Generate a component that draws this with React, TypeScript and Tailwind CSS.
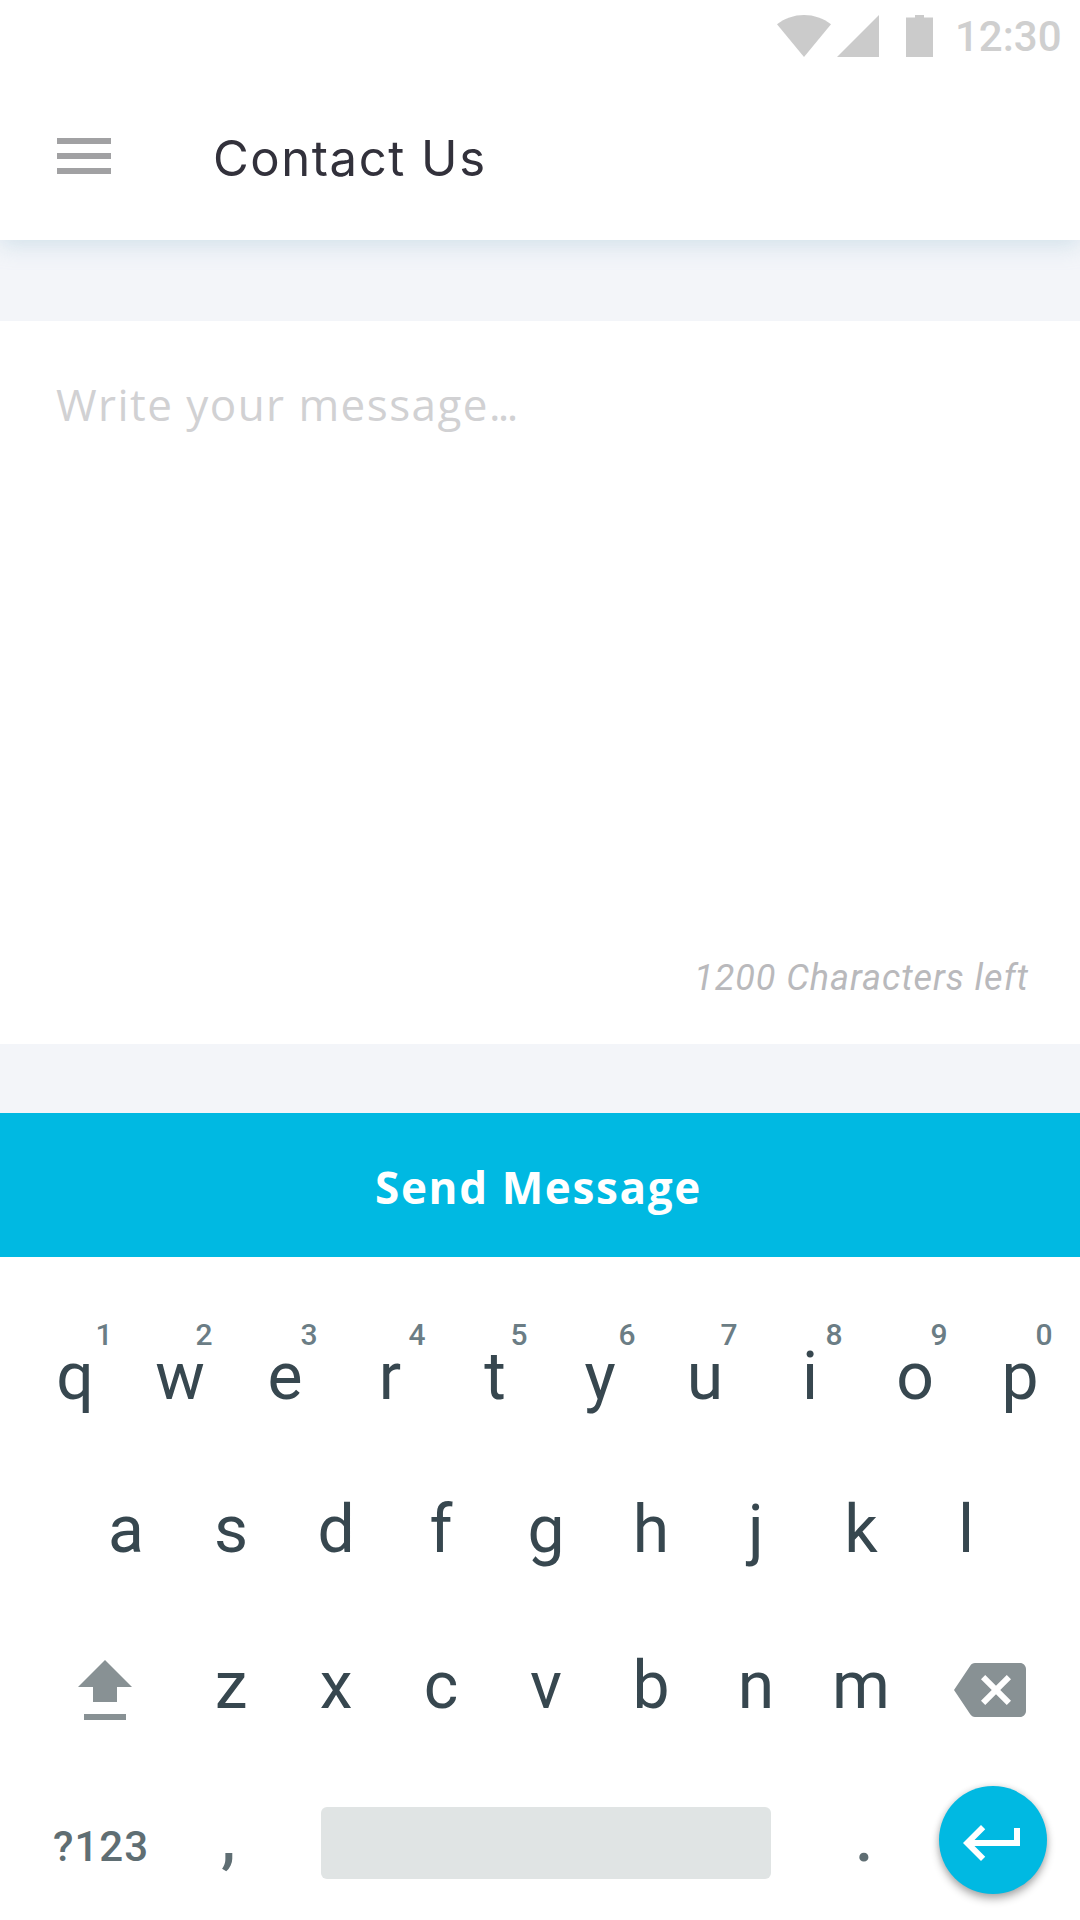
const topRow = [
  { key: 'q', digit: '1', shift: 'left-[73px]' },
  { key: 'w', digit: '2', shift: 'left-[68px]' },
  { key: 'e', digit: '3', shift: 'left-[68px]' },
  { key: 'r', digit: '4', shift: 'left-[71px]' },
  { key: 't', digit: '5', shift: 'left-[68px]' },
  { key: 'y', digit: '6', shift: 'left-[71px]' },
  { key: 'u', digit: '7', shift: 'left-[68px]' },
  { key: 'i', digit: '8', shift: 'left-[68px]' },
  { key: 'o', digit: '9', shift: 'left-[68px]' },
  { key: 'p', digit: '0', shift: 'left-[68px]' },
];
const middleRow = ['a', 's', 'd', 'f', 'g', 'h', 'j', 'k', 'l'];
const bottomRow = ['z', 'x', 'c', 'v', 'b', 'n', 'm'];

function Key({ label, digit, shift }: { label: string; digit?: string; shift?: string }) {
  return (
    <button className="relative w-[105px] shrink-0 text-center text-[66px] leading-[77px] text-[#37474f]">
      {label}
      {digit && (
        <span className={`absolute -top-[21px] text-[30px] leading-[35px] font-medium text-[#6b7d85] ${shift}`}>
          {digit}
        </span>
      )}
    </button>
  );
}

function StatusBar() {
  return (
    <div className="flex h-[72px] items-start justify-end pr-[18px] text-[#cbcbcb]">
      <svg className="mt-[15px] h-[42px] w-[54px]" viewBox="0 0 54 42" fill="currentColor">
        <path d="M27 42 0 9.3C7.6 3.4 16.9 0 27 0s19.400 3.4 27 9.300z" />
      </svg>
      <svg className="mt-[15px] ml-1.5 h-[42px] w-[42px]" viewBox="0 0 42 42" fill="currentColor">
        <path d="M42 0v42H0z" />
      </svg>
      <svg className="mt-[15px] ml-[27px] h-[42px] w-[27px]" viewBox="0 0 27 42" fill="currentColor">
        <path d="M9 0h9v2.500h9V42H0V2.500h9z" />
      </svg>
      <span className="mt-3 ml-[22px] w-[107px] text-[42px] leading-[49px] font-medium text-[#cfcfcf]">12:30</span>
    </div>
  );
}

export default function App() {
  return (
    <div className="flex h-[1920px] w-[1080px] flex-col overflow-hidden bg-[#f3f5f9] font-['Roboto',sans-serif]">
      <header className="h-[240px] shrink-0 bg-white shadow-[0_6px_20px_rgba(170,200,218,0.42)]">
        <StatusBar />
        <div className="flex items-start pl-[57px]">
          <button className="mt-[66px] flex w-[54px] flex-col gap-[9px]" aria-label="Menu">
            <span className="h-1.5 bg-[#a1a1a3]" />
            <span className="h-1.5 bg-[#a1a1a3]" />
            <span className="h-1.5 bg-[#a1a1a3]" />
          </button>
          <h1 className="mt-[57px] ml-[102px] font-['Inter',sans-serif] text-[49px] leading-[59px] tracking-[1.55px] text-[#32313b]">
            Contact Us
          </h1>
        </div>
      </header>

      <section className="mt-[81px] flex h-[723px] shrink-0 flex-col justify-between bg-white pt-[55px] pr-[51px] pb-[45px] pl-[56px]">
        <p className="font-['Open_Sans',sans-serif] text-[44px] leading-[57px] tracking-[1.450px] text-[#d1d1d3]">
          Write your message<span className="tracking-[-2.700px]">...</span>
        </p>
        <p className="text-right text-[36px] leading-[42px] tracking-[0.95px] text-[#b9b9bc] italic">
          1200 Characters left
        </p>
      </section>

      <button className="mt-[69px] flex h-36 shrink-0 items-start justify-center bg-[#00b9e2] pt-[45px] pr-[3px] font-['Open_Sans',sans-serif] text-[44px] leading-[59px] font-bold tracking-[1.650px] text-white">
        Send Message
      </button>

      <div className="flex grow flex-col bg-white pt-[81px]">
        <div className="flex h-[153px] shrink-0 items-start pl-[22.5px]">
          {topRow.map((k) => (
            <Key key={k.key} label={k.key} digit={k.digit} shift={k.shift} />
          ))}
        </div>
        <div className="flex h-[156px] shrink-0 items-start pl-[73.5px]">
          {middleRow.map((k) => (
            <Key key={k} label={k} />
          ))}
        </div>
        <div className="flex h-[153px] shrink-0 items-start pl-[78px] text-[#889194]">
          <svg className="mt-[13px] h-[60px] w-[54px] shrink-0" viewBox="0 0 54 60" fill="currentColor">
            <path d="M27 0l27 27H39v15H15V27H0zM6 54h42v6H6z" />
          </svg>
          <div className="ml-[46.5px] flex">
            {bottomRow.map((k) => (
              <Key key={k} label={k} />
            ))}
          </div>
          <svg className="mt-[7px] ml-[40.5px] h-[72px] w-[72px] shrink-0" viewBox="0 0 24 24" fill="currentColor">
            <path d="M22 3H7c-.69 0-1.230.35-1.590.88L0 12l5.410 8.110c.36.53.9.89 1.590.89h15c1.100 0 2-.9 2-2V5c0-1.100-.9-2-2-2zm-3 12.590L17.590 17 14 13.410 10.410 17 9 15.590 12.590 12 9 8.410 10.410 7 14 10.590 17.590 7 19 8.410 15.410 12 19 15.590z" />
          </svg>
        </div>
        <div className="flex h-[120px] shrink-0 items-start pl-[53px] font-medium text-[#5f6e73]">
          <button className="mt-[22px] w-[168px] text-left text-[42px] leading-[49px] tracking-[1px]">?123</button>
          <button className="w-[100px] text-left text-[66px] leading-[77px]">,</button>
          <button className="mt-[7px] h-[72px] w-[450px] rounded-md bg-[#e0e4e4]" aria-label="Space" />
          <button className="ml-[84px] w-[84px] text-left text-[66px] leading-[77px]">.</button>
          <button
            className="-mt-[14px] flex h-[108px] w-[108px] items-center justify-center rounded-full bg-[#00b9e2] pt-[5px] text-white shadow-[0_5px_8px_rgba(0,0,0,0.3),0_0_6px_rgba(0,0,0,0.12)]"
            aria-label="Enter"
          >
            <svg className="h-[72px] w-[72px]" viewBox="0 0 24 24" fill="currentColor">
              <path d="M19 7v4H5.830l3.580-3.590L8 6l-6 6 6 6 1.410-1.410L5.830 13H21V7z" />
            </svg>
          </button>
        </div>
      </div>
    </div>
  );
}
